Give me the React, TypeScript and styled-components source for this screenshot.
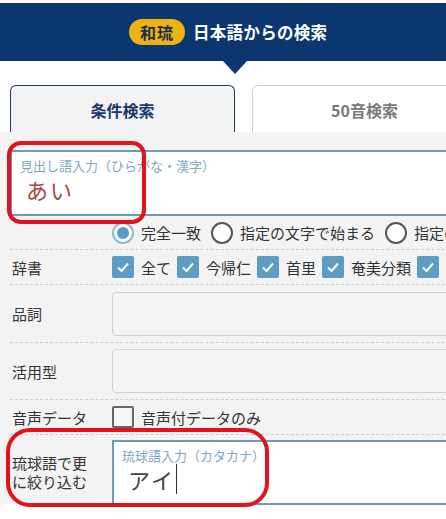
import styled, { createGlobalStyle } from "styled-components";

const GlobalStyle = createGlobalStyle`
  html, body {
    margin: 0;
    padding: 0;
    background: #ffffff;
  }
  body {
    font-family: "Noto Sans CJK JP", "Noto Sans", sans-serif;
    color: #333;
    overflow: hidden;
  }
`;

const Page = styled.div`
  position: relative;
  width: 446px;
  height: 519px;
  overflow: hidden;
  padding-top: 3px;
  box-sizing: border-box;
`;

const Header = styled.header`
  position: relative;
  height: 58px;
  background: #0c3670;
  display: flex;
  align-items: center;
  padding-left: 129px;
  gap: 8px;

  &::after {
    content: "";
    position: absolute;
    left: 223px;
    bottom: -13px;
    border-left: 12px solid transparent;
    border-right: 12px solid transparent;
    border-top: 13px solid #0c3670;
  }
`;

const Badge = styled.span`
  display: inline-flex;
  align-items: center;
  justify-content: center;
  width: 56px;
  height: 26px;
  border-radius: 13px;
  background: #edb316;
  color: #1d2c48;
  font-weight: 700;
  font-size: 16px;
  letter-spacing: 1px;
`;

const Title = styled.h1`
  margin: 0;
  color: #ffffff;
  font-size: 16.5px;
  font-weight: 700;
  letter-spacing: 0.3px;
`;

const Tabs = styled.div`
  display: flex;
  gap: 17px;
  padding: 24px 0 0 10px;
  width: 560px;
`;

const Tab = styled.div<{ $active?: boolean }>`
  width: 225px;
  height: 47px;
  box-sizing: border-box;
  display: flex;
  align-items: center;
  justify-content: center;
  border-radius: 6px 6px 0 0;
  border: ${(p) => (p.$active ? "1.5px solid #1d3a6a" : "1px solid #cfcfcf")};
  border-bottom: none;
  background: ${(p) => (p.$active ? "#f3f3f3" : "#ffffff")};
  color: ${(p) => (p.$active ? "#1a3968" : "#7a7a7a")};
  font-size: 16px;
  font-weight: 700;
  padding-top: 2px;
`;

const Panel = styled.section`
  background: #f3f3f3;
  width: 600px;
  padding: 18px 0 0 10px;
  height: 354px;
`;

const TextBox = styled.div<{ $h: number }>`
  height: ${(p) => p.$h}px;
  box-sizing: border-box;
  background: #ffffff;
  border: 2px solid #6f9bb4;
  padding: 6px 8px 0;
  display: flex;
  flex-direction: column;
`;

const BoxLabel = styled.span`
  font-size: 13px;
  line-height: 16px;
  color: #7ea7c2;
`;

const BoxValue = styled.span<{ $color: string }>`
  font-size: 22px;
  line-height: 30px;
  color: ${(p) => p.$color};
  padding-left: 6px;
  letter-spacing: 2px;
  display: flex;
  align-items: center;
`;

const Caret = styled.span`
  display: inline-block;
  width: 1px;
  height: 30px;
  background: #333;
  margin-left: 1px;
`;

const Row = styled.div<{ $h: number; $plain?: boolean }>`
  display: grid;
  grid-template-columns: 102px 1fr;
  align-items: center;
  height: ${(p) => p.$h}px;
  border-bottom: ${(p) => (p.$plain ? "none" : "1px dashed #cdcdcd")};
`;

const Label = styled.div`
  padding: 0 16px 0 2px;
  font-size: 15px;
  line-height: 19px;
  color: #333;
`;

const Options = styled.div`
  display: flex;
  align-items: center;
  gap: 6px;
  white-space: nowrap;
  font-size: 15px;
  color: #333;
`;

const Option = styled.label<{ $gap?: number }>`
  display: inline-flex;
  align-items: center;
  gap: 7px;
  margin-right: ${(p) => p.$gap ?? 0}px;
`;

const Radio = styled.span<{ $on?: boolean }>`
  width: 22px;
  height: 22px;
  box-sizing: border-box;
  border-radius: 50%;
  border: 2px solid ${(p) => (p.$on ? "#8bb8d6" : "#555")};
  background: #fff;
  display: inline-flex;
  align-items: center;
  justify-content: center;

  &::before {
    content: "";
    display: ${(p) => (p.$on ? "block" : "none")};
    width: 12px;
    height: 12px;
    border-radius: 50%;
    background: #5a9bc6;
  }
`;

const Check = styled.span<{ $on?: boolean }>`
  width: 22px;
  height: 22px;
  box-sizing: border-box;
  border-radius: 2px;
  background: ${(p) => (p.$on ? "#5d9cc3" : "#f6f6f6")};
  border: ${(p) => (p.$on ? "none" : "2px solid #666")};
  display: inline-flex;
  align-items: center;
  justify-content: center;
`;

const SelectBox = styled.div`
  height: 44px;
  box-sizing: border-box;
  border: 1px solid #cfcfcf;
  border-radius: 4px;
  background: #f4f4f4;
`;

const Highlight = styled.div<{ $x: number; $y: number; $w: number; $h: number; $r: number }>`
  position: absolute;
  left: ${(p) => p.$x}px;
  top: ${(p) => p.$y}px;
  width: ${(p) => p.$w}px;
  height: ${(p) => p.$h}px;
  border: 4px solid #e2131c;
  border-radius: ${(p) => p.$r}px;
  box-sizing: border-box;
  pointer-events: none;
`;

const Tick = () => (
  <svg width="14" height="14" viewBox="0 0 14 14">
    <path d="M2 7.5 L5.5 11 L12 3.5" fill="none" stroke="#fff" strokeWidth="2" />
  </svg>
);

const dictionaries = ["全て", "今帰仁", "首里", "奄美分類", "宮古"];

export default function App() {
  return (
    <Page>
      <GlobalStyle />
      <Header>
        <Badge>和琉</Badge>
        <Title>日本語からの検索</Title>
      </Header>

      <Tabs>
        <Tab $active>条件検索</Tab>
        <Tab>50音検索</Tab>
      </Tabs>

      <Panel>
        <TextBox $h={66}>
          <BoxLabel>見出し語入力（ひらがな・漢字）</BoxLabel>
          <BoxValue $color="#a3483d">あい</BoxValue>
        </TextBox>

        <Row $h={33}>
          <Label />
          <Options>
            <Option $gap={4}>
              <Radio $on />
              完全一致
            </Option>
            <Option $gap={4}>
              <Radio />
              指定の文字で始まる
            </Option>
            <Option>
              <Radio />
              指定の文字で終わる
            </Option>
          </Options>
        </Row>

        <Row $h={34}>
          <Label>辞書</Label>
          <Options>
            {dictionaries.map((d) => (
              <Option key={d}>
                <Check $on>
                  <Tick />
                </Check>
                {d}
              </Option>
            ))}
          </Options>
        </Row>

        <Row $h={57}>
          <Label>品詞</Label>
          <SelectBox />
        </Row>

        <Row $h={56}>
          <Label>活用型</Label>
          <SelectBox />
        </Row>

        <Row $h={34}>
          <Label>音声データ</Label>
          <Options>
            <Option>
              <Check />
              音声付データのみ
            </Option>
          </Options>
        </Row>

        <Row $h={74} $plain>
          <Label>琉球語で更に絞り込む</Label>
          <TextBox $h={65}>
            <BoxLabel>琉球語入力（カタカナ）</BoxLabel>
            <BoxValue $color="#444">
              アイ
              <Caret />
            </BoxValue>
          </TextBox>
        </Row>
      </Panel>

      <Highlight $x={7} $y={141} $w={139} $h={83} $r={14} />
      <Highlight $x={6} $y={428} $w={263} $h={79} $r={24} />
    </Page>
  );
}
